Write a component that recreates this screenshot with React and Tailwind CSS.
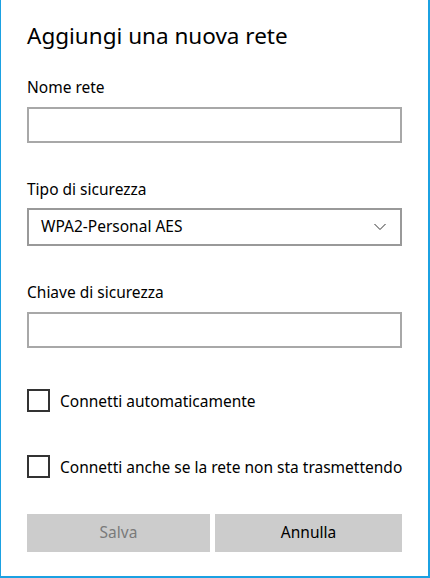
import React from 'react';

const font = { fontFamily: '"Noto Sans", "Liberation Sans", sans-serif' };

const Field = ({ label, children, className = '' }) => (
  <div className={className}>
    <div className="text-[15.5px] leading-5 h-5 text-black whitespace-nowrap">{label}</div>
    {children}
  </div>
);

const Checkbox = ({ label, className = '' }) => (
  <label className={`flex items-center h-[23px] ${className}`}>
    <span className="w-[23px] h-[23px] border-2 border-[#333] bg-white shrink-0" />
    <span className="ml-[10px] text-[15.5px] leading-5 text-black whitespace-nowrap">{label}</span>
  </label>
);

export default function App() {
  return (
    <div
      className="w-[430px] h-[578px] bg-white border-l border-r-2 border-b-2 border-[#1ba1e2] overflow-hidden pt-[21px] pl-[26px] pr-[25px]"
      style={font}
    >
      <h1 className="text-[22.5px] leading-[30px] text-black whitespace-nowrap">
        Aggiungi una nuova rete
      </h1>

      <Field label="Nome rete" className="mt-[26px]">
        <input
          type="text"
          className="mt-[10px] block w-[375px] h-[36px] border-2 border-[#a8a8a8] bg-white outline-none px-3"
        />
      </Field>

      <Field label="Tipo di sicurezza" className="mt-[36px]">
        <div className="mt-[9px] w-[375px] h-[38px] border-2 border-[#999] flex items-center justify-between pl-[12px] pr-[14px]">
          <span className="text-[15.5px] text-black">WPA2-Personal AES</span>
          <svg width="12" height="8" viewBox="0 0 12 8" fill="none">
            <path d="M0.5 1 L6 6.5 L11.5 1" stroke="#333" strokeWidth="1" />
          </svg>
        </div>
      </Field>

      <Field label="Chiave di sicurezza" className="mt-[36px]">
        <input
          type="password"
          className="mt-[10px] block w-[375px] h-[36px] border-2 border-[#a8a8a8] bg-white outline-none px-3"
        />
      </Field>

      <Checkbox label="Connetti automaticamente" className="mt-[41px]" />
      <Checkbox label="Connetti anche se la rete non sta trasmettendo" className="mt-[43px]" />

      <div className="mt-[36px] flex gap-[5px] w-[375px]">
        <button className="w-[183px] h-[38px] bg-[#cccccc] text-[15.5px] text-[#7a7a7a]">Salva</button>
        <button className="flex-1 h-[38px] bg-[#cccccc] text-[15.5px] text-black">Annulla</button>
      </div>
    </div>
  );
}
